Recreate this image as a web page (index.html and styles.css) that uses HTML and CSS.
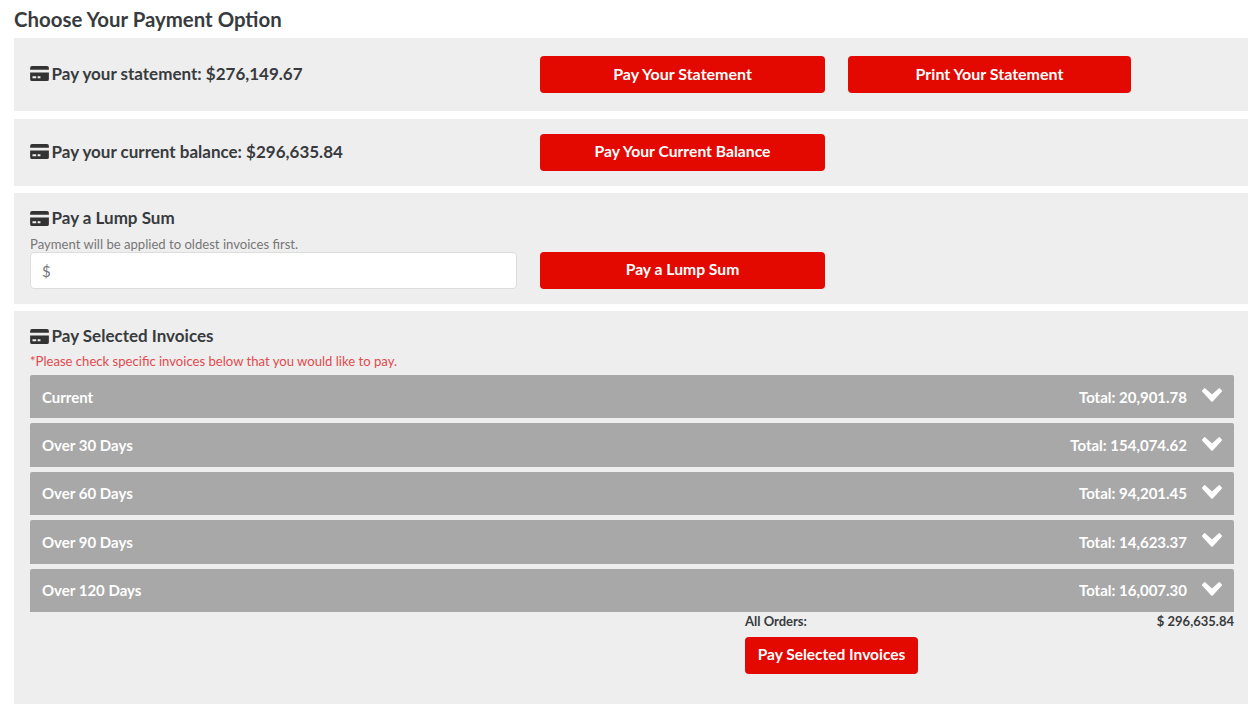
FILE: index.html
```html
<!DOCTYPE html>
<html lang="en">
<head>
    <meta charset="UTF-8">
    <title>Choose Your Payment Option</title>
    <link rel="stylesheet" href="styles.css">
</head>
<body>
    <svg class="sprite" width="0" height="0">
        <symbol id="card" viewBox="0 0 20 16">
            <path d="M2 0h16a2 2 0 0 1 2 2v2H0V2a2 2 0 0 1 2-2z"/>
            <path fill-rule="evenodd" d="M0 7h20v7a2 2 0 0 1-2 2H2a2 2 0 0 1-2-2zm2.5 4v2h4v-2zm5.5 0v2h3v-2z"/>
        </symbol>
        <symbol id="chevron" viewBox="0 0 20 14">
            <path d="M3.4 0.4 10 6.6 16.6 0.4a1 1 0 0 1 1.4 0l1.7 1.9a1 1 0 0 1 0 1.4L10.7 13.4a1 1 0 0 1-1.4 0L.3 3.7a1 1 0 0 1 0-1.4L2 .4a1 1 0 0 1 1.4 0z"/>
        </symbol>
    </svg>

    <h1>Choose Your Payment Option</h1>

    <section class="panel panel-statement">
        <div class="pay-row">
            <h2 class="pay-title"><svg class="card"><use href="#card"/></svg>Pay your statement: $276,149.67</h2>
            <a class="btn btn-wide">Pay Your Statement</a>
            <a class="btn btn-print">Print Your Statement</a>
        </div>
    </section>

    <section class="panel panel-balance">
        <div class="pay-row">
            <h2 class="pay-title"><svg class="card"><use href="#card"/></svg>Pay your current balance: $296,635.84</h2>
            <a class="btn btn-wide btn-balance">Pay Your Current Balance</a>
        </div>
    </section>

    <section class="panel panel-lump">
        <h2 class="pay-title"><svg class="card"><use href="#card"/></svg>Pay a Lump Sum</h2>
        <p class="hint">Payment will be applied to oldest invoices first.</p>
        <div class="lump-row">
            <input class="amount" type="text" placeholder="$">
            <a class="btn btn-wide btn-balance">Pay a Lump Sum</a>
        </div>
    </section>

    <section class="panel panel-invoices">
        <h2 class="pay-title"><svg class="card"><use href="#card"/></svg>Pay Selected Invoices</h2>
        <p class="hint hint-red">*Please check specific invoices below that you would like to pay.</p>
        <div class="aging">
            <div class="aging-bar"><span>Current</span><span class="aging-total">Total: 20,901.78</span><svg class="chevron"><use href="#chevron"/></svg></div>
            <div class="aging-bar"><span>Over 30 Days</span><span class="aging-total">Total: 154,074.62</span><svg class="chevron"><use href="#chevron"/></svg></div>
            <div class="aging-bar"><span>Over 60 Days</span><span class="aging-total">Total: 94,201.45</span><svg class="chevron"><use href="#chevron"/></svg></div>
            <div class="aging-bar"><span>Over 90 Days</span><span class="aging-total">Total: 14,623.37</span><svg class="chevron"><use href="#chevron"/></svg></div>
            <div class="aging-bar"><span>Over 120 Days</span><span class="aging-total">Total: 16,007.30</span><svg class="chevron"><use href="#chevron"/></svg></div>
        </div>
        <div class="summary">
            <div class="summary-line"><span>All Orders:</span><span>$ 296,635.84</span></div>
            <a class="btn btn-selected">Pay Selected Invoices</a>
        </div>
    </section>
</body>
</html>
```

FILE: styles.css
```css
* {
    box-sizing: border-box;
}
body {
    margin: 0;
    padding: 8px 10px 0 14px;
    color: #333;
    background-color: #fff;
    font-family: Lato, "Open Sans", sans-serif;
}
.sprite {
    position: absolute;
}
h1 {
    margin: 0 0 7px;
    font-size: 20.4px;
    line-height: 23px;
    font-weight: 700;
    color: #383b3e;
}
.panel {
    margin-bottom: 8px;
    padding: 0 14px 0 16px;
    background-color: #eee;
}
.panel-statement {
    height: 73px;
    padding-top: 18px;
}
.panel-balance {
    height: 67px;
    padding-top: 15px;
    margin-bottom: 7px;
}
.panel-lump {
    height: 111px;
    padding-top: 14px;
    margin-bottom: 7px;
}
.panel-invoices {
    height: 393px;
    padding-top: 14px;
}
.pay-row {
    display: flex;
    align-items: center;
}
.pay-row .pay-title {
    width: 510px;
    margin-top: -2px;
}
.pay-title {
    display: flex;
    align-items: center;
    margin: 0;
    font-size: 17px;
    line-height: 22px;
    font-weight: 700;
    color: #383b3e;
}
.card {
    width: 19px;
    height: 15px;
    margin: 0 3px 0 -0.5px;
    fill: #333;
}
.btn {
    display: block;
    height: 37px;
    line-height: 35px;
    border-radius: 4px;
    background-color: #e30800;
    color: #fff;
    font-size: 16px;
    font-weight: 700;
    text-align: center;
}
.btn-wide {
    width: 285px;
}
.btn-balance {
    font-size: 15.7px;
}
.btn-print {
    width: 283px;
    margin-left: 23px;
}
.hint {
    margin: 7px 0 0;
    font-size: 13.1px;
    line-height: 16px;
    color: #777;
}
.hint-red {
    margin-top: 6px;
    color: #e24a4f;
}
.lump-row {
    display: flex;
    align-items: center;
    gap: 23px;
}
.amount {
    width: 487px;
    height: 37px;
    padding: 0 11px;
    border: 1px solid #ddd;
    border-radius: 4px;
    background-color: #fff;
    font-family: inherit;
    font-size: 15px;
}
.amount::placeholder {
    color: #777;
}
.aging {
    display: flex;
    flex-direction: column;
    gap: 5px;
    margin-top: 6px;
}
.aging-bar {
    display: flex;
    align-items: center;
    height: 43.4px;
    padding: 0 12px;
    background-color: #a8a8a8;
    border-radius: 2px 2px 0 0;
    color: #fff;
    font-size: 15px;
    font-weight: 700;
}
.aging-total {
    margin-left: auto;
}
.chevron {
    width: 20px;
    height: 14px;
    margin: -3px 0 0 15px;
    fill: #fff;
}
.summary {
    margin: 1px 0 0 715px;
    font-size: 13px;
    font-weight: 700;
    color: #383b3e;
}
.summary-line {
    display: flex;
    justify-content: space-between;
    line-height: 16px;
}
.btn-selected {
    width: 173px;
    margin-top: 8px;
    font-size: 15.5px;
}
```
